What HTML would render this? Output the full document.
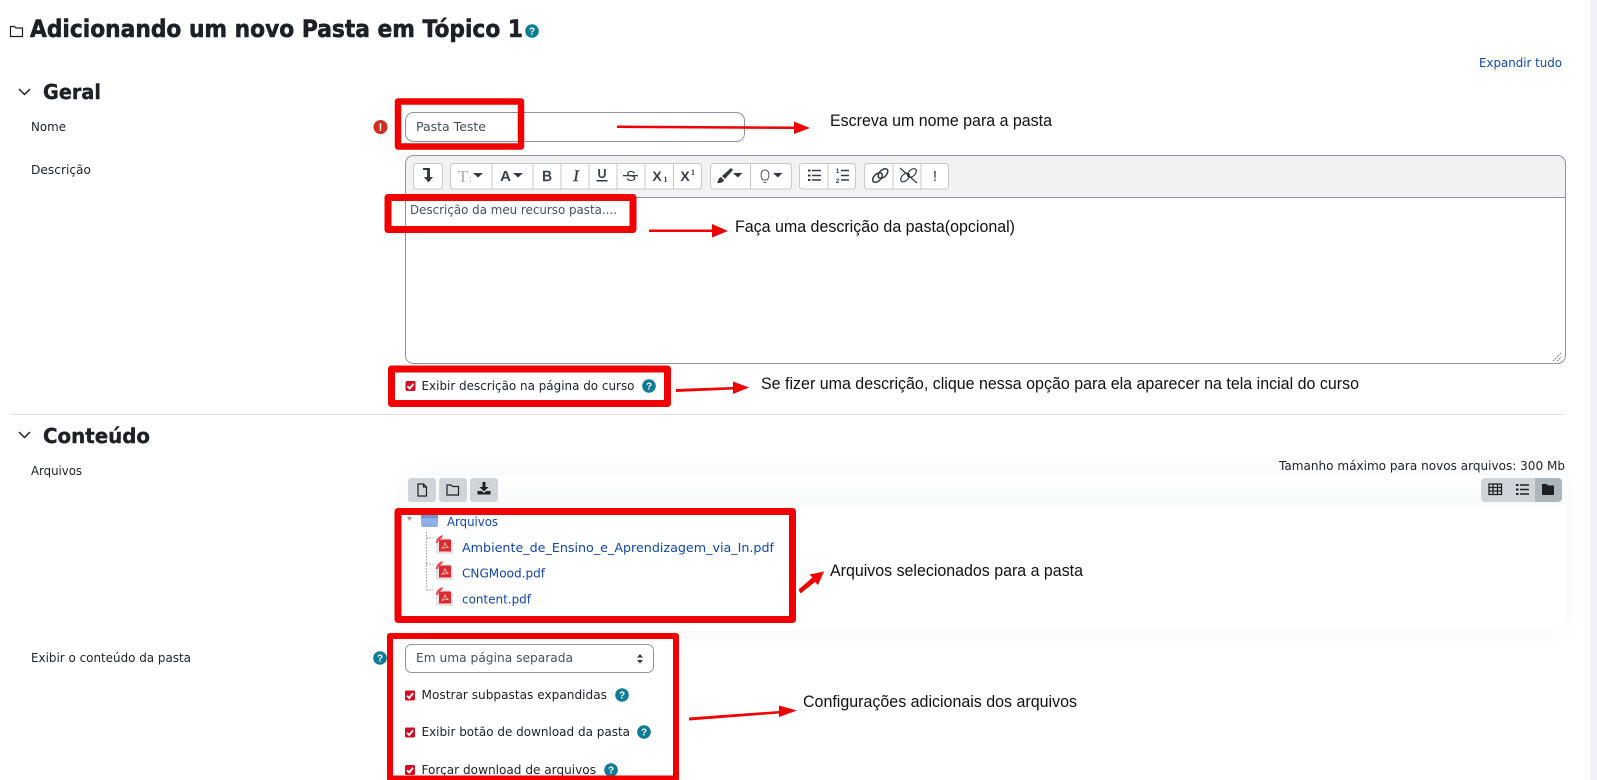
<!DOCTYPE html>
<html lang="pt"><head><meta charset="utf-8"><title>Adicionando um novo Pasta</title>
<style>
html,body{margin:0;padding:0;background:#fff;width:1597px;height:780px;overflow:hidden}
#band{position:absolute;left:1590px;top:0;width:7px;height:780px;background:#f0f2f8}
#fm{position:absolute;left:405px;top:475px;width:1161px;height:156px;background:#fff;border-radius:6px;box-shadow:0 0 24px rgba(0,0,0,.045)}
#fmt{position:absolute;left:0;top:0;width:100%;height:30px;background:linear-gradient(#fff,#f8f9fa)}
svg{position:absolute;left:0;top:0}
.p{font-family:"DejaVu Sans","Liberation Sans",sans-serif;font-size:12.2px;fill:#1d2125}
.g{fill:#495057}
.l{fill:#0f47ad}
.h{font-family:"DejaVu Sans","Liberation Sans",sans-serif;font-weight:bold;stroke:#1d2125}
.a{font-family:"Liberation Sans",Arial,sans-serif;font-size:16.5px;fill:#111}
.q{font-family:"Liberation Sans",sans-serif;font-size:10px;font-weight:bold;fill:#fff;text-anchor:middle}
.t{font-family:"Liberation Serif",serif;font-size:15px;font-weight:bold;fill:#3a3f45;text-anchor:middle}
.tb{fill:#fff;stroke:#c8c8c8;stroke-width:1}
.dv{stroke:#c8c8c8;stroke-width:1}
.ic{fill:#343a40}
.ln{fill:none;stroke:#343a40;stroke-width:1.5}
</style></head><body>
<div id="band"></div>
<div id="fm"><div id="fmt"></div></div>
<svg width="1597" height="780" viewBox="0 0 1597 780" xmlns="http://www.w3.org/2000/svg">
<defs>
<g id="pdf"><path d="M0 3h13l4 4v12H0z" fill="#e6e6ea"/><rect x="3" y="4.500" width="12" height="12" fill="#dc2a2e"/><path d="M5.500 13.500c2-1 3-4 3.500-6 .5 2 1.500 4 3.500 5-2 0-4.500 0-7 1z" fill="none" stroke="#f8d0d0" stroke-width=".7"/><path d="M0 8c0-4 3-7 7-8l-1 3c-2 1-4 3-4 5z" fill="#ea4a47"/></g>
<g id="chk"><rect width="10" height="10" rx="1.500" fill="#cf0f26"/><path d="M2 5.200l2.200 2.300L8 2.800" fill="none" stroke="#fff" stroke-width="1.800"/></g>
</defs>

<!-- title -->
<path d="M10.500 26.500h4l1.500 1.500h6.500v8.500h-12z" fill="none" stroke="#1d2125" stroke-width="1.200"/>
<text x="30" y="37" class="h" font-size="24" stroke-width=".6" fill="#1d2125" textLength="493" lengthAdjust="spacingAndGlyphs">Adicionando um novo Pasta em Tópico 1</text>
<circle cx="532" cy="31" r="6.800" fill="#0f7c95"/><text x="532" y="34.500" class="q">?</text>
<text x="1479" y="67" class="p l" textLength="83" lengthAdjust="spacingAndGlyphs">Expandir tudo</text>

<!-- Geral -->
<path d="M19 89l5.500 5.500L30 89" fill="none" stroke="#1d2125" stroke-width="1.500"/>
<text x="43" y="99" class="h" font-size="20.500" stroke-width=".4" fill="#1d2125" textLength="58" lengthAdjust="spacingAndGlyphs">Geral</text>
<text x="31" y="131" class="p" textLength="35" lengthAdjust="spacingAndGlyphs">Nome</text>
<circle cx="380.500" cy="127" r="7" fill="#ca3120"/><text x="380.500" y="131" class="q" style="font-size:11px">!</text>
<rect x="405.500" y="112.500" width="339" height="29" rx="8" fill="#fff" stroke="#8f959e"/>
<text x="416" y="131" class="p g" textLength="70" lengthAdjust="spacingAndGlyphs">Pasta Teste</text>
<text x="31" y="174" class="p" textLength="60" lengthAdjust="spacingAndGlyphs">Descrição</text>

<!-- editor -->
<path d="M405.500 197.500V163a8 8 0 0 1 8-8H1557a8 8 0 0 1 8 8v34.500z" fill="#f2f2f2"/>
<rect x="405.500" y="155.500" width="1160" height="208" rx="8" fill="none" stroke="#8f959e"/>
<line x1="405" y1="197.500" x2="1565" y2="197.500" stroke="#8f959e"/>
<path d="M1553 361l8-8M1557 361l4-4" stroke="#666" stroke-width="1" stroke-dasharray="1.500 1"/>
<rect x="413.500" y="163.500" width="29" height="25.500" rx="3" class="tb"/>
<rect x="450.500" y="163.500" width="251" height="25.500" rx="3" class="tb"/>
<rect x="710.500" y="163.500" width="81" height="25.500" rx="3" class="tb"/>
<rect x="799.500" y="163.500" width="56" height="25.500" rx="3" class="tb"/>
<rect x="864.500" y="163.500" width="84" height="25.500" rx="3" class="tb"/>
<path class="dv" d="M492 164v25M533 164v25M561 164v25M589 164v25M617 164v25M645 164v25M673.500 164v25M750.500 164v25M828 164v25M893 164v25M921 164v25"/>
<!-- toolbar icons -->
<path d="M423 168h7v9h3l-4.500 5.500-4.500-5.500h3v-7h-4z" fill="#343a40"/>
<text x="463" y="182" style="fill:#aaa;font:17px 'Liberation Serif',serif" text-anchor="middle">T</text><text x="469" y="182" style="fill:#aaa;font:10px 'Liberation Serif',serif">:</text>
<path d="M473 173h10l-5 4.500z" class="ic"/>
<text x="505.500" y="181" style="font:bold 15px 'Liberation Sans',sans-serif;fill:#3a3f45" text-anchor="middle">A</text><path d="M513 173h10l-5 4.500z" class="ic"/>
<text x="547" y="181" class="t" style="font-family:'Liberation Sans',sans-serif;font-weight:normal;font-size:15px;stroke:#3a3f45;stroke-width:.5">B</text>
<text x="576" y="181" class="t" style="font-style:italic;font-weight:normal;font-size:16px;stroke:#3a3f45;stroke-width:.5">I</text>
<text x="602" y="178" class="t" style="font-family:'Liberation Sans',sans-serif;font-size:12.500px">U</text><rect x="596.500" y="180" width="11" height="1.500" fill="#3a3f45"/>
<text x="631" y="181" class="t" style="font-family:'Liberation Sans',sans-serif;font-weight:normal;font-size:15px">S</text><rect x="623" y="175" width="15" height="1.300" fill="#3a3f45"/>
<text x="657" y="181" class="t" style="font-family:'Liberation Sans',sans-serif;font-size:14px">X</text><text x="665.500" y="182" class="t" style="font-size:8px">1</text>
<text x="685" y="181" class="t" style="font-family:'Liberation Sans',sans-serif;font-size:14px">X</text><text x="693" y="175" class="t" style="font-size:8px">1</text>
<path d="M731 168l2 2-8 9-3-3zM721 177l3 3c-1 3-4 3-7 3 1-1 1-5 4-6z" class="ic"/><path d="M733 173h9.500l-4.750 4.500z" class="ic"/>
<path d="M763 180c-3-3-2.500-10 2-10s5 7 2 10zM763.500 182.500h3" fill="none" stroke="#555" stroke-width="1"/><path d="M773 173h9.500l-4.750 4.500z" class="ic"/>
<path d="M808 169.500h2.500v2h-2.500zM808 174.500h2.500v2h-2.500zM808 179h2.500v2h-2.500z" class="ic"/><path d="M812 170.500h9M812 175.500h9M812 180h9" stroke="#343a40" stroke-width="1.600"/>
<text x="837.500" y="173" style="font:bold 6.500px 'Liberation Sans',sans-serif;fill:#343a40" text-anchor="middle">1</text><text x="837.500" y="183" style="font:bold 6.500px 'Liberation Sans',sans-serif;fill:#343a40" text-anchor="middle">2</text><path d="M841 170.500h8M841 175.500h8M841 180h8" stroke="#343a40" stroke-width="1.600"/>
<ellipse cx="877.500" cy="177.500" rx="5.800" ry="3.500" transform="rotate(-45 877.500 177.500)" class="ln"/>
<ellipse cx="883" cy="173.500" rx="5.800" ry="3.500" transform="rotate(-45 883 173.500)" class="ln"/>
<ellipse cx="905" cy="177.500" rx="5.200" ry="3.200" transform="rotate(-45 905 177.500)" class="ln" style="stroke-width:1.200"/>
<ellipse cx="912" cy="173" rx="5.200" ry="3.200" transform="rotate(-45 912 173)" class="ln" style="stroke-width:1.200"/>
<path d="M900 168l17 15" class="ln" style="stroke-width:1.200"/>
<text x="935" y="181" style="font:15px 'Liberation Sans',sans-serif;fill:#343a40" text-anchor="middle">!</text>
<text x="410" y="214" class="p g" textLength="207" lengthAdjust="spacingAndGlyphs">Descrição da meu recurso pasta....</text>

<!-- check 1 -->
<use href="#chk" x="405.500" y="381"/>
<text x="421.500" y="390" class="p" textLength="213" lengthAdjust="spacingAndGlyphs">Exibir descrição na página do curso</text>
<circle cx="649" cy="386" r="6.800" fill="#0f7c95"/><text x="649" y="389.500" class="q">?</text>
<line x1="10" y1="414.500" x2="1565" y2="414.500" stroke="#dee2e6"/>

<!-- Conteudo -->
<path d="M19 432l5.500 5.500L30 432" fill="none" stroke="#1d2125" stroke-width="1.500"/>
<text x="43" y="443" class="h" font-size="20.500" stroke-width=".4" fill="#1d2125" textLength="107" lengthAdjust="spacingAndGlyphs">Conteúdo</text>
<text x="31" y="475" class="p" textLength="51" lengthAdjust="spacingAndGlyphs">Arquivos</text>
<text x="1279" y="470" class="p" textLength="286" lengthAdjust="spacingAndGlyphs">Tamanho máximo para novos arquivos: 300 Mb</text>

<!-- file manager toolbar -->
<rect x="408" y="478" width="28" height="24" rx="3" fill="#ced4da"/>
<rect x="439" y="478" width="28" height="24" rx="3" fill="#ced4da"/>
<rect x="470" y="478" width="28" height="24" rx="3" fill="#ced4da"/>
<path d="M418 484h5.500l3 3v9h-8.500zM423.500 484v3h3" fill="none" stroke="#1d2125" stroke-width="1.200"/>
<path d="M447 485h4l1.500 1.500h6v8.500h-11.500z" fill="none" stroke="#1d2125" stroke-width="1.200"/>
<path d="M482.500 482h3v5h3l-4.500 4.500-4.500-4.500h3z" fill="#1d2125"/><path d="M477.500 491h4l2.500 2 2.500-2h4v3.500h-13z" fill="#1d2125"/>
<path d="M1485 478h50v24h-50a4 4 0 0 1-4-4v-16a4 4 0 0 1 4-4z" fill="#ced4da"/>
<path d="M1535 478h23a4 4 0 0 1 4 4v16a4 4 0 0 1-4 4h-23z" fill="#adb5bd"/>
<path d="M1489 484h12.500v10.500H1489zM1489 487.500h12.500M1489 491h12.500M1493 484v10.500M1497.500 484v10.500" fill="none" stroke="#1d2125" stroke-width="1.300"/>
<path d="M1516 484h2.500v2h-2.500zM1516 488.500h2.500v2h-2.500zM1516 493h2.500v2h-2.500z" fill="#1d2125"/><path d="M1520 485h9M1520 489.500h9M1520 494h9" stroke="#1d2125" stroke-width="1.500"/>
<path d="M1542 484h4.500l1.500 1.500h6v9.500h-12z" fill="#1d2125"/>

<!-- tree -->
<path d="M407 517h5l-2.500 4z" fill="#999"/>
<path d="M421 515h17v10a2 2 0 0 1-2 2h-13a2 2 0 0 1-2-2z" fill="#8fb0e6"/>
<rect x="421" y="515" width="17" height="3" fill="#6f93cc"/>
<text x="447" y="526" class="p l" textLength="51" lengthAdjust="spacingAndGlyphs">Arquivos</text>
<path d="M426.500 532v58M426.500 538h7M426.500 564h7M426.500 590h7" stroke="#999" fill="none" stroke-dasharray="1.500 1.500"/>
<use href="#pdf" x="436" y="535"/><use href="#pdf" x="436" y="561"/><use href="#pdf" x="436" y="587"/>
<text x="462" y="552" class="p l" textLength="312" lengthAdjust="spacingAndGlyphs">Ambiente_de_Ensino_e_Aprendizagem_via_In.pdf</text>
<text x="462" y="577.500" class="p l" textLength="83" lengthAdjust="spacingAndGlyphs">CNGMood.pdf</text>
<text x="462" y="603.500" class="p l" textLength="69" lengthAdjust="spacingAndGlyphs">content.pdf</text>

<!-- display -->
<text x="31" y="662" class="p" textLength="160" lengthAdjust="spacingAndGlyphs">Exibir o conteúdo da pasta</text>
<circle cx="380" cy="658" r="6.800" fill="#0f7c95"/><text x="380" y="661.500" class="q">?</text>
<rect x="405.500" y="644.500" width="248" height="28" rx="6" fill="#fff" stroke="#8f959e"/>
<text x="416" y="662" class="p g" textLength="157" lengthAdjust="spacingAndGlyphs">Em uma página separada</text>
<path d="M637 657.500l3-3.500 3 3.500zM637 660l3 3.500 3-3.500z" fill="#343a40"/>
<use href="#chk" x="405" y="690.500"/>
<text x="421.500" y="699" class="p" textLength="185.500" lengthAdjust="spacingAndGlyphs">Mostrar subpastas expandidas</text>
<circle cx="622" cy="695" r="6.800" fill="#0f7c95"/><text x="622" y="698.500" class="q">?</text>
<use href="#chk" x="405" y="727.500"/>
<text x="421.500" y="736" class="p" textLength="208.500" lengthAdjust="spacingAndGlyphs">Exibir botão de download da pasta</text>
<circle cx="644" cy="732" r="6.800" fill="#0f7c95"/><text x="644" y="735.500" class="q">?</text>
<use href="#chk" x="405" y="765"/>
<text x="421.500" y="774" class="p" textLength="174.500" lengthAdjust="spacingAndGlyphs">Forçar download de arquivos</text>
<circle cx="611" cy="770" r="6.800" fill="#0f7c95"/><text x="611" y="773.500" class="q">?</text>

<!-- red boxes -->
<g fill="none" stroke="#f00000" stroke-linejoin="round">
<rect x="398" y="101.500" width="123" height="45" stroke-width="6.500"/>
<rect x="388" y="197.500" width="245" height="32" stroke-width="7"/>
<rect x="391.500" y="369" width="276" height="34.500" stroke-width="7"/>
<rect x="398" y="511.500" width="394.500" height="108" stroke-width="7"/>
<rect x="390" y="636" width="286" height="142.500" stroke-width="6"/>
</g>
<!-- arrows -->
<g fill="#f00000">
<path d="M617 125.500l177 1v-5l16 6.500-16 6v-5l-177-1z"/>
<path d="M649 229.500h63v-5.500l16 7-16 6.500v-5.500h-63z"/>
<path d="M676 389l57-2v-5.500l16 6-16 6.500v-4.500l-57 2.500z"/>
<path d="M798.500 589.500l14-12-3-3 14.500-3-6 13.500-3-3-14.500 11.500z"/>
<path d="M689 717.500l90-6.500v-5.500l18 5-18 6.500v-3.500l-90 7z"/>
</g>
<!-- annotations -->
<text x="830" y="126" class="a" textLength="222" lengthAdjust="spacingAndGlyphs">Escreva um nome para a pasta</text>
<text x="735" y="232" class="a" textLength="280" lengthAdjust="spacingAndGlyphs">Faça uma descrição da pasta(opcional)</text>
<text x="761" y="389" class="a" textLength="598" lengthAdjust="spacingAndGlyphs">Se fizer uma descrição, clique nessa opção para ela aparecer na tela incial do curso</text>
<text x="830" y="576" class="a" textLength="253" lengthAdjust="spacingAndGlyphs">Arquivos selecionados para a pasta</text>
<text x="803" y="707" class="a" textLength="274" lengthAdjust="spacingAndGlyphs">Configurações adicionais dos arquivos</text>
</svg>
</body></html>
